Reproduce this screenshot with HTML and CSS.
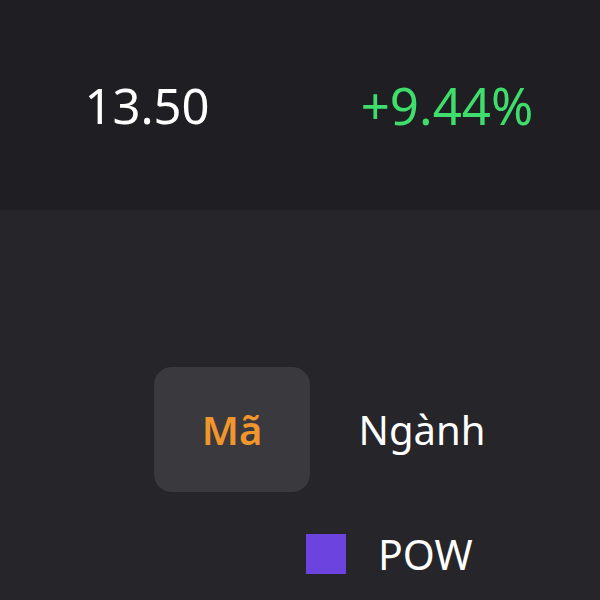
FILE: index.html
```html
<!DOCTYPE html>
<html lang="vi">
<head>
<meta charset="utf-8">
<link rel="stylesheet" href="styles.css">
</head>
<body>
<section class="quote">
  <div class="cell price">13.50</div>
  <div class="cell change">+9.44%</div>
</section>
<nav class="tabs">
  <div class="tab active">Mã</div>
  <div class="tab">Ngành</div>
</nav>
<div class="legend">
  <span class="swatch"></span>
  <span class="label">POW</span>
</div>
</body>
</html>
```
FILE: styles.css
```css
html, body {
  margin: 0;
  padding: 0;
}
body {
  background: #26252a;
  font-family: "Noto Sans", "Open Sans", sans-serif;
  color: #ffffff;
  width: 600px;
  height: 600px;
  overflow: hidden;
}
.quote {
  height: 210px;
  background: #1f1e23;
  display: grid;
  grid-template-columns: 294px 306px;
  align-items: center;
}
.cell {
  text-align: center;
  font-size: 49px;
  line-height: 1;
}
.price {
  color: #ffffff;
}
.change {
  color: #3fde6c;
  font-size: 51px;
}
.tabs {
  display: flex;
  gap: 34px;
  padding-left: 154px;
  margin-top: 157px;
}
.tab {
  width: 156px;
  height: 125px;
  border-radius: 18px;
  display: flex;
  align-items: center;
  justify-content: center;
  font-size: 40px;
  color: #ffffff;
}
.tab.active {
  background: #3a393e;
  color: #f0962c;
  font-weight: 600;
}
.legend {
  display: flex;
  align-items: center;
  gap: 32px;
  padding-left: 306px;
  margin-top: 42px;
}
.swatch {
  width: 40px;
  height: 40px;
  background: #6d43e0;
}
.label {
  font-size: 41px;
  line-height: 40px;
}
```
